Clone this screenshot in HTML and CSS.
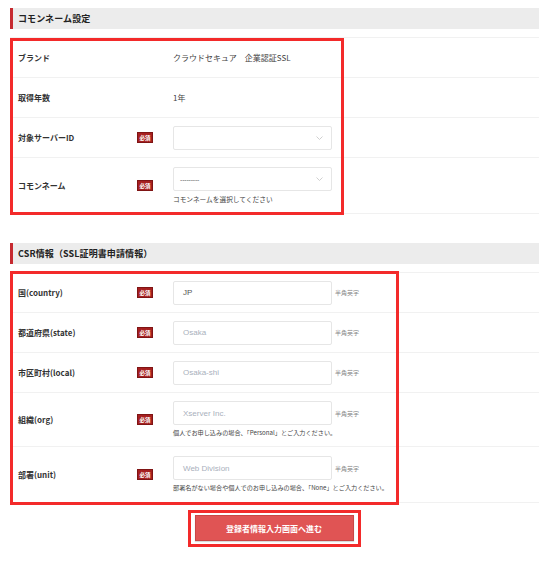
FILE: index.html
```html
<!DOCTYPE html>
<html lang="ja">
<head>
<meta charset="utf-8">
<title>コモンネーム設定</title>
<link rel="stylesheet" href="styles.css">
</head>
<body>
<div class="page">
  <section class="panel">
    <h2 class="panel-title">コモンネーム設定</h2>
    <div class="rows">
      <div class="frame frame-common"></div>
      <div class="row">
        <div class="label">ブランド</div>
        <div class="badge-cell"></div>
        <div class="field value">クラウドセキュア　企業認証SSL</div>
      </div>
      <div class="row">
        <div class="label">取得年数</div>
        <div class="badge-cell"></div>
        <div class="field value">1年</div>
      </div>
      <div class="row">
        <div class="label">対象サーバーID</div>
        <div class="badge-cell"><span class="badge">必須</span></div>
        <div class="field">
          <div class="select"><span class="select-text"></span><svg class="chev" width="7" height="4" viewBox="0 0 7 4"><path d="M0.5 0.5 L3.5 3.5 L6.5 0.5" fill="none" stroke="#c4c4c4" stroke-width="0.8"/></svg></div>
        </div>
      </div>
      <div class="row row-tall">
        <div class="label">コモンネーム</div>
        <div class="badge-cell"><span class="badge">必須</span></div>
        <div class="field">
          <div class="select"><span class="select-text">---------</span><svg class="chev" width="7" height="4" viewBox="0 0 7 4"><path d="M0.5 0.5 L3.5 3.5 L6.5 0.5" fill="none" stroke="#c4c4c4" stroke-width="0.8"/></svg></div>
          <p class="hint">コモンネームを選択してください</p>
        </div>
      </div>
    </div>
  </section>

  <section class="panel panel-csr">
    <h2 class="panel-title">CSR情報（SSL証明書申請情報）</h2>
    <div class="rows">
      <div class="frame frame-csr"></div>
      <div class="row">
        <div class="label">国(country)</div>
        <div class="badge-cell"><span class="badge">必須</span></div>
        <div class="field">
          <div class="input-line"><div class="input filled">JP</div><span class="suffix">半角英字</span></div>
        </div>
      </div>
      <div class="row">
        <div class="label">都道府県(state)</div>
        <div class="badge-cell"><span class="badge">必須</span></div>
        <div class="field">
          <div class="input-line"><div class="input">Osaka</div><span class="suffix">半角英字</span></div>
        </div>
      </div>
      <div class="row">
        <div class="label">市区町村(local)</div>
        <div class="badge-cell"><span class="badge">必須</span></div>
        <div class="field">
          <div class="input-line"><div class="input">Osaka-shi</div><span class="suffix">半角英字</span></div>
        </div>
      </div>
      <div class="row row-tall row-tall-sm">
        <div class="label">組織(org)</div>
        <div class="badge-cell"><span class="badge">必須</span></div>
        <div class="field">
          <div class="input-line"><div class="input">Xserver Inc.</div><span class="suffix">半角英字</span></div>
          <p class="hint hint-sm">個人でお申し込みの場合、「Personal」とご入力ください。</p>
        </div>
      </div>
      <div class="row row-tall">
        <div class="label">部署(unit)</div>
        <div class="badge-cell"><span class="badge">必須</span></div>
        <div class="field">
          <div class="input-line"><div class="input">Web Division</div><span class="suffix">半角英字</span></div>
          <p class="hint hint-sm">部署名がない場合や個人でのお申し込みの場合、「None」とご入力ください。</p>
        </div>
      </div>
    </div>
  </section>

  <div class="actions">
    <div class="btn-frame">
      <button class="btn" type="button">登録者情報入力画面へ進む</button>
    </div>
  </div>
</div>
</body>
</html>
```

FILE: styles.css
```css
* { box-sizing: border-box; }
html, body { margin: 0; padding: 0; background: #fff; }
body {
  font-family: "Noto Sans CJK JP", "Noto Sans", "Liberation Sans", sans-serif;
  color: #333;
}
.page {
  width: 550px;
  padding: 8px 11px 0 10px;
}
.panel-title {
  margin: 0;
  height: 21px;
  line-height: 21px;
  background: #ececec;
  border-left: 3px solid #c62a30;
  padding-left: 5px;
  font-size: 9px;
  font-weight: 700;
  color: #222;
  letter-spacing: 0.1px;
}
.panel-csr { margin-top: 29px; }
.rows {
  position: relative;
  margin-top: 8px;
  border-top: 1px solid #f1f1f1;
}
.frame {
  position: absolute;
  left: 0;
  border: 3px solid #f32a2a;
  pointer-events: none;
  z-index: 2;
}
.frame-common { top: 0; bottom: -1px; width: 334px; }
.frame-csr { top: -2px; bottom: -2px; width: 389px; }
.row {
  display: flex;
  align-items: center;
  height: 40px;
  padding-left: 8px;
  border-bottom: 1px solid #f1f1f1;
}
.row-tall { height: 56px; }
.row-tall-sm { height: 54px; }
.label {
  width: 119px;
  font-size: 8px;
  font-weight: 700;
  color: #333;
}
.badge-cell {
  width: 36px;
  display: flex;
  align-items: center;
}
.badge {
  display: inline-block;
  width: 16px;
  height: 11px;
  line-height: 11px;
  background: #a61f1f;
  border: 0.5px solid #7f1414;
  color: #fff;
  font-size: 5.5px;
  font-weight: 700;
  text-align: center;
}
.field { flex: 1; }
.value {
  font-size: 8px;
  color: #444;
}
.select {
  width: 159px;
  height: 24px;
  border: 1px solid #e6e6e6;
  border-radius: 2px;
  display: flex;
  align-items: center;
  justify-content: space-between;
  padding: 0 8px 0 6px;
  background: #fff;
}
.select-text {
  font-family: "Liberation Sans", sans-serif;
  font-size: 7px;
  color: #666;
  letter-spacing: -0.2px;
}
.chev { display: block; }
.hint {
  margin: 3px 0 0;
  height: 10px;
  line-height: 10px;
  font-size: 6.7px;
  color: #444;
}
.hint-sm { font-size: 6.15px; }
.input-line {
  display: flex;
  align-items: center;
  gap: 3px;
}
.input {
  width: 159px;
  height: 24px;
  border: 1px solid #e6e6e6;
  border-radius: 2px;
  padding-left: 9px;
  display: flex;
  align-items: center;
  font-family: "Liberation Sans", sans-serif;
  font-size: 8px;
  color: #a9b0bc;
  background: #fff;
}
.input.filled { color: #555; }
.suffix {
  font-size: 6px;
  color: #888;
}
.actions {
  display: flex;
  justify-content: center;
  margin-top: 7px;
  padding-right: 1px;
}
.btn-frame {
  border: 3px solid #f32a2a;
  padding: 2px 4px 3px;
}
.btn {
  display: block;
  width: 159px;
  height: 26px;
  margin: 0;
  padding: 0;
  background: #e05454;
  border: 1px solid #c94646;
  box-shadow: 0 1px 1px rgba(0,0,0,0.15);
  color: #fff;
  font-family: "Noto Sans CJK JP", sans-serif;
  font-size: 8px;
  font-weight: 700;
}
```
